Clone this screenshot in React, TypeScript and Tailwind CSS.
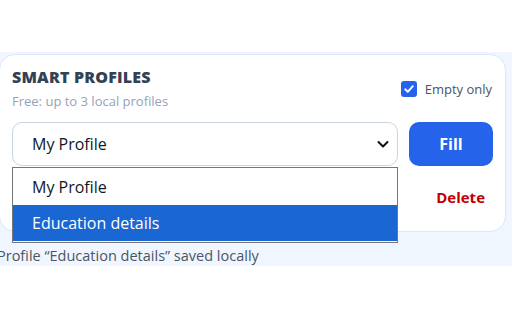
import React from 'react';

export default function App() {
  return (
    <div className="w-[512px] h-[320px] bg-white overflow-hidden" style={{ fontFamily: '"Open Sans", "Noto Sans", sans-serif' }}>
      <div className="h-[52px]" />
      <div className="bg-[#eff6ff] h-[214px] pr-[6px] pt-[2px]">
        <div className="relative ml-[-1px] bg-white border border-[#dbe7fb] rounded-[16px] h-[178px] pl-[12px] pr-[12px] pt-[11px]">
          <div className="flex items-start justify-between">
            <div>
              <div className="text-[16px] font-extrabold text-[#334155] leading-[22px] tracking-[0.2px]">SMART PROFILES</div>
              <div className="text-[13px] text-[#94a3b8] leading-[18px] mt-[4px]">Free: up to 3 local profiles</div>
            </div>
            <label className="flex items-center gap-[8px] mt-[14px] mr-[1px]">
              <span className="w-[16px] h-[16px] rounded-[3px] bg-[#2563eb] flex items-center justify-center">
                <svg width="12" height="12" viewBox="0 0 12 12" fill="none">
                  <path d="M2.2 6.3 L4.8 8.8 L9.8 3.2" stroke="white" strokeWidth="1.9" strokeLinecap="round" strokeLinejoin="round" />
                </svg>
              </span>
              <span className="text-[13px] text-[#4b5563] leading-[18px]">Empty only</span>
            </label>
          </div>
          <div className="flex gap-[11px] mt-[12px]">
            <div className="flex-1 h-[44px] border border-[#cbd5e1] rounded-[10px] flex items-center justify-between pl-[19px] pr-[6px]">
              <span className="text-[16px] text-[#111827]">My Profile</span>
              <svg width="16" height="16" viewBox="0 0 16 16" fill="none">
                <path d="M3.5 6 L8 10.5 L12.5 6" stroke="#111" strokeWidth="2" strokeLinecap="round" strokeLinejoin="round" />
              </svg>
            </div>
            <button className="w-[84px] h-[44px] rounded-[10px] bg-[#2563eb] text-white text-[16px] font-bold">Fill</button>
          </div>
          <div className="flex justify-end mt-[21px] pr-[8px]">
            <span className="text-[15px] leading-[20px] font-bold text-[#c00000]">Delete</span>
          </div>
          <div className="absolute left-[12px] top-[112px] w-[386px] h-[76px] bg-white border border-[#767676] text-[16px]">
            <div className="h-[37px] flex items-center pl-[19px] text-[#111827]">My Profile</div>
            <div className="h-[36px] flex items-center pl-[19px] bg-[#1a66d2] text-white">Education details</div>
          </div>
        </div>
        <div className="text-[14.5px] text-[#4b5563] mt-[14px] ml-[-3px] leading-[20px] whitespace-nowrap">Profile “Education details” saved locally</div>
      </div>
    </div>
  );
}
